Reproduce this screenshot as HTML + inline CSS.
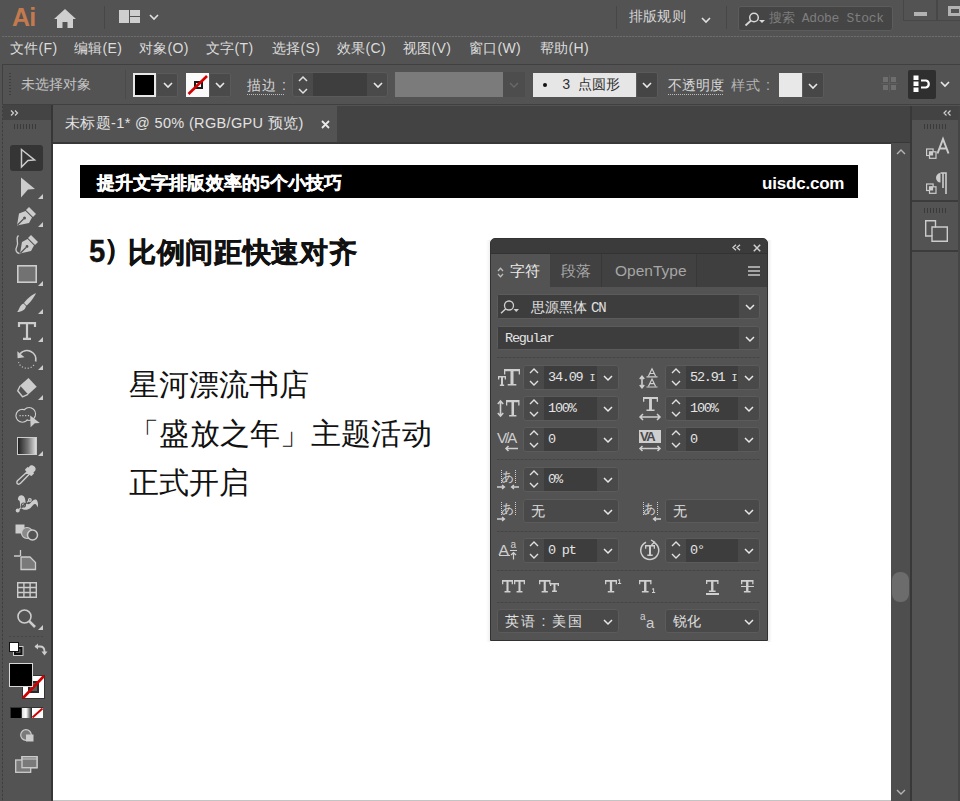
<!DOCTYPE html>
<html><head><meta charset="utf-8">
<style>
*{margin:0;padding:0;box-sizing:border-box}
html,body{width:960px;height:801px;overflow:hidden;background:#535353;font-family:"Liberation Sans",sans-serif;color:#dcdcdc;position:relative}
.a{position:absolute}
.t{position:absolute;white-space:nowrap;line-height:1}
svg{position:absolute;overflow:visible}
.menu{position:absolute;top:40px;font-size:14px;color:#dcdcdc;white-space:nowrap;line-height:16px;letter-spacing:0.3px}
.dd{position:absolute;background:#4a4a4a;border:1px solid #5a5a5a;border-radius:2px}
.pm{font-family:"Liberation Mono",monospace;font-size:13.5px;color:#e4e4e4;letter-spacing:-1.2px}
.pm2{font-family:"Liberation Mono",monospace;letter-spacing:-1px}
.pc{font-size:14px;color:#e0e0e0}
.chev{position:absolute;width:10px;height:6px}
</style></head><body>
<!-- ================= TITLE BAR ================= -->
<div class="t" style="left:12px;top:5px;font-size:25px;color:#c47a4e;font-weight:bold;letter-spacing:-0.8px">Ai</div>
<svg style="left:54px;top:9px" width="22" height="19" viewBox="0 0 22 19"><path d="M11 0 L22 10 L19 10 L19 19 L13.5 19 L13.5 13 L8.5 13 L8.5 19 L3 19 L3 10 L0 10 Z" fill="#cfcfcf"/></svg>
<div class="a" style="left:104px;top:6px;width:1px;height:23px;background:#474747"></div>
<svg style="left:119px;top:10px" width="22" height="14" viewBox="0 0 22 14"><rect x="0" y="0" width="10" height="13" fill="#cfcfcf"/><rect x="11" y="0" width="10" height="6" fill="#cfcfcf"/><rect x="11" y="7" width="10" height="6" fill="#cfcfcf"/></svg>
<svg style="left:149px;top:14px" width="10" height="6" viewBox="0 0 10 6"><path d="M1 1 L5 5 L9 1" fill="none" stroke="#e0e0e0" stroke-width="1.6"/></svg>
<div class="a" style="left:616px;top:6px;width:1px;height:23px;background:#474747"></div>
<div class="t" style="left:629px;top:9px;font-size:14px;color:#d8d8d8;letter-spacing:0.2px">排版规则</div>
<svg style="left:701px;top:17px" width="10" height="6" viewBox="0 0 10 6"><path d="M1 1 L5 5 L9 1" fill="none" stroke="#e0e0e0" stroke-width="1.6"/></svg>
<div class="a" style="left:726px;top:6px;width:1px;height:23px;background:#474747"></div>
<div class="a" style="left:738px;top:6px;width:155px;height:25px;background:#454545;border:1px solid #5c5c5c;border-radius:3px"></div>
<svg style="left:744px;top:12px" width="22" height="14" viewBox="0 0 22 14"><circle cx="10" cy="5.5" r="4.3" fill="none" stroke="#d8d8d8" stroke-width="1.5"/><path d="M7 8.5 L1.5 13.5" stroke="#d8d8d8" stroke-width="1.8"/><path d="M15 8 L21 8 L18 11 Z" fill="#d8d8d8"/></svg>
<div class="t" style="left:769px;top:12px;font-size:13px;color:#7e7e7e;font-family:'Liberation Mono',monospace;letter-spacing:-0.35px">搜索 Adobe Stock</div>
<div class="a" style="left:903px;top:-2px;width:34px;height:23px;border:1px solid #474747"></div>
<div class="a" style="left:914px;top:12px;width:12.5px;height:3.5px;background:#b2b2b2"></div>
<div class="a" style="left:937px;top:-2px;width:30px;height:23px;border:1px solid #474747"></div>
<div class="a" style="left:948px;top:6px;width:14px;height:10px;border:3px solid #b2b2b2"></div>
<div class="a" style="left:2px;top:36px;width:958px;height:1px;background:repeating-linear-gradient(90deg,#6c6c6c 0 2px,#5a5a5a 2px 3px)"></div>

<!-- ================= MENU BAR ================= -->
<div class="menu" style="left:10px">文件(F)</div>
<div class="menu" style="left:74px">编辑(E)</div>
<div class="menu" style="left:139px">对象(O)</div>
<div class="menu" style="left:206px">文字(T)</div>
<div class="menu" style="left:272px">选择(S)</div>
<div class="menu" style="left:337px">效果(C)</div>
<div class="menu" style="left:403px">视图(V)</div>
<div class="menu" style="left:469px">窗口(W)</div>
<div class="menu" style="left:540px">帮助(H)</div>

<!-- ================= CONTROL BAR ================= -->
<div class="a" style="left:2px;top:64px;width:958px;height:41px;border-top:1px solid #404040;border-left:1px solid #404040;border-bottom:1px solid #404040;background:#535353"></div>
<div class="a" style="left:9px;top:73px;width:2px;height:24px;background:repeating-linear-gradient(#3e3e3e 0 1px,transparent 1px 3px)"></div>
<div class="t" style="left:21px;top:77px;font-size:14px;color:#c4c4c4">未选择对象</div>
<div class="a" style="left:125px;top:70px;width:1px;height:29px;background:#4a4a4a"></div>
<!-- fill -->
<div class="a" style="left:133px;top:73px;width:23px;height:24px;background:#000;border:2px solid #e8e8e8"></div>
<div class="dd" style="left:156px;top:73px;width:22px;height:24px;background:#4a4a4a"></div>
<svg style="left:163px;top:82px" width="10" height="6" viewBox="0 0 10 6"><path d="M1 1 L5 5 L9 1" fill="none" stroke="#e8e8e8" stroke-width="1.6"/></svg>
<!-- stroke -->
<div class="a" style="left:186px;top:73px;width:23px;height:24px;background:#fafafa"></div>
<div class="a" style="left:194px;top:81px;width:9px;height:8px;border:2px solid #1a1a1a"></div>
<svg style="left:186px;top:73px" width="23" height="24" viewBox="0 0 23 24"><path d="M2.5 21 L21 3" stroke="#d40000" stroke-width="2.6"/></svg>
<div class="dd" style="left:209px;top:73px;width:22px;height:24px"></div>
<svg style="left:215px;top:82px" width="10" height="6" viewBox="0 0 10 6"><path d="M1 1 L5 5 L9 1" fill="none" stroke="#e8e8e8" stroke-width="1.6"/></svg>
<!-- stroke weight -->
<div class="t" style="left:247px;top:78px;font-size:14px;color:#d4d4d4;letter-spacing:1px">描边 :</div>
<div class="a" style="left:247px;top:94px;width:38px;height:1px;background:repeating-linear-gradient(90deg,#bcbcbc 0 1px,transparent 1px 2px)"></div>
<div class="a" style="left:292px;top:72px;width:96px;height:25px;border:1px solid #5a5a5a;border-radius:3px;background:#4a4a4a"></div>
<div class="a" style="left:313px;top:73px;width:54px;height:23px;background:#3e3e3e"></div>
<svg style="left:298px;top:76px" width="10" height="18" viewBox="0 0 10 18"><path d="M1 5 L5 1 L9 5 M1 13 L5 17 L9 13" fill="none" stroke="#e0e0e0" stroke-width="1.5"/></svg>
<svg style="left:373px;top:82px" width="10" height="6" viewBox="0 0 10 6"><path d="M1 1 L5 5 L9 1" fill="none" stroke="#e8e8e8" stroke-width="1.6"/></svg>
<!-- gray box -->
<div class="a" style="left:395px;top:72px;width:108px;height:25px;background:#7b7b7b"></div>
<div class="a" style="left:503px;top:72px;width:22px;height:25px;background:#4d4d4d"></div>
<svg style="left:509px;top:82px" width="10" height="6" viewBox="0 0 10 6"><path d="M1 1 L5 5 L9 1" fill="none" stroke="#686868" stroke-width="1.5"/></svg>
<!-- brush def -->
<div class="a" style="left:533px;top:73px;width:103px;height:24px;background:#e6e6e6"></div>
<div class="a" style="left:543px;top:83px;width:4px;height:4px;border-radius:2px;background:#111"></div>
<div class="t" style="left:562px;top:78px;font-size:14px;color:#2e2e2e;font-family:'Liberation Mono',monospace">3</div>
<div class="t" style="left:578px;top:77px;font-size:14px;color:#2e2e2e">点圆形</div>
<div class="dd" style="left:636px;top:72px;width:22px;height:26px;background:#454545"></div>
<svg style="left:642px;top:82px" width="10" height="6" viewBox="0 0 10 6"><path d="M1 1 L5 5 L9 1" fill="none" stroke="#e8e8e8" stroke-width="1.6"/></svg>
<!-- opacity -->
<div class="t" style="left:668px;top:78px;font-size:14px;color:#d8d8d8">不透明度</div>
<div class="a" style="left:668px;top:94px;width:56px;height:1px;background:repeating-linear-gradient(90deg,#bcbcbc 0 1px,transparent 1px 2px)"></div>
<div class="t" style="left:731px;top:78px;font-size:14px;color:#b4b4b4;letter-spacing:1px">样式 :</div>
<div class="a" style="left:779px;top:73px;width:23px;height:24px;background:#e8e8e8"></div>
<div class="dd" style="left:802px;top:72px;width:22px;height:26px;background:#474747"></div>
<svg style="left:808px;top:83px" width="10" height="6" viewBox="0 0 10 6"><path d="M1 1 L5 5 L9 1" fill="none" stroke="#e8e8e8" stroke-width="1.6"/></svg>
<!-- align dim -->
<svg style="left:881px;top:75px" width="17" height="17" viewBox="0 0 17 17"><rect x="2" y="2" width="5" height="5" fill="#6e6e6e"/><rect x="10" y="2" width="5" height="5" fill="#6e6e6e"/><rect x="2" y="10" width="5" height="5" fill="#6e6e6e"/><rect x="10" y="10" width="5" height="5" fill="#6e6e6e"/><path d="M8.5 0 V17 M0 8.5 H17" stroke="#606060" stroke-width="0.8"/></svg>
<div class="a" style="left:908px;top:70px;width:28px;height:29px;background:#2f2f2f;border-radius:2px"></div>
<svg style="left:913px;top:75px" width="19" height="18" viewBox="0 0 19 18"><rect x="0.5" y="0.5" width="5" height="4.5" fill="#fff"/><rect x="0.5" y="6.5" width="5" height="4.5" fill="#fff"/><rect x="0.5" y="12.5" width="5" height="4.5" fill="#fff"/><path d="M8 5.5 H13 A3.6 3.6 0 0 1 13 12.5 H8" fill="none" stroke="#fff" stroke-width="2.2"/></svg>
<svg style="left:940px;top:81px" width="10" height="6" viewBox="0 0 10 6"><path d="M1 1 L5 5 L9 1" fill="none" stroke="#e8e8e8" stroke-width="1.6"/></svg>

<!-- ================= TAB ROW ================= -->
<div class="a" style="left:53px;top:106px;width:857px;height:38px;background:#434343"></div>
<div class="a" style="left:53px;top:142px;width:857px;height:2px;background:#383838"></div>
<div class="a" style="left:53px;top:106px;width:284px;height:36px;background:#535353"></div>
<div class="t" style="left:65px;top:116px;font-size:14.5px;color:#e2e2e2;letter-spacing:0.35px">未标题-1* @ 50% (RGB/GPU 预览)</div>
<svg style="left:321px;top:120px" width="9" height="9" viewBox="0 0 9 9"><path d="M1 1 L8 8 M8 1 L1 8" stroke="#e8e8e8" stroke-width="1.8"/></svg>

<!-- ================= CANVAS ================= -->
<div class="a" style="left:53px;top:144px;width:838px;height:657px;background:#ffffff"></div><div class="a" style="left:53px;top:800px;width:838px;height:1px;background:#c4c4c4"></div>
<div class="a" style="left:51px;top:105px;width:2px;height:696px;background:#363636"></div>
<!-- scrollbar -->
<div class="a" style="left:891px;top:143px;width:19px;height:658px;background:#4e4e4e"></div>
<svg style="left:896px;top:149px" width="10" height="6" viewBox="0 0 10 6"><path d="M1 5 L5 1 L9 5" fill="none" stroke="#b4b4b4" stroke-width="1.4"/></svg>
<div class="a" style="left:892px;top:572px;width:17px;height:30px;background:#6c6c6c;border-radius:8px"></div>
<svg style="left:896px;top:789px" width="10" height="6" viewBox="0 0 10 6"><path d="M1 1 L5 5 L9 1" fill="none" stroke="#b4b4b4" stroke-width="1.4"/></svg>

<!-- ================= LEFT TOOLBAR ================= -->
<div class="a" style="left:2px;top:106px;width:1px;height:695px;background:repeating-linear-gradient(#3e3e3e 0 2px,#4e4e4e 2px 4px)"></div>
<div class="a" style="left:3px;top:105px;width:48px;height:15px;background:#444444"></div>
<svg style="left:10px;top:110px" width="9" height="6" viewBox="0 0 9 6"><path d="M1 0.5 L3.5 3 L1 5.5 M5 0.5 L7.5 3 L5 5.5" fill="none" stroke="#d0d0d0" stroke-width="1.2"/></svg>
<div class="a" style="left:3px;top:120px;width:48px;height:681px;background:#535353"></div>
<div class="a" style="left:14px;top:124px;width:23px;height:5px;background:repeating-linear-gradient(90deg,#3a3a3a 0 1px,transparent 1px 3px)"></div>


<!-- ================= RIGHT PANEL ================= -->
<div class="a" style="left:910px;top:106px;width:2px;height:695px;background:#383838"></div>
<div class="a" style="left:912px;top:106px;width:48px;height:14px;background:#434343"></div>
<svg style="left:943px;top:110px" width="9" height="6" viewBox="0 0 9 6"><path d="M3.5 0.5 L1 3 L3.5 5.5 M7.5 0.5 L5 3 L7.5 5.5" fill="none" stroke="#d0d0d0" stroke-width="1.2"/></svg>
<div class="a" style="left:912px;top:120px;width:46px;height:82px;background:#535353;border-bottom:2px solid #3c3c3c"></div>
<div class="a" style="left:924px;top:124px;width:23px;height:5px;background:repeating-linear-gradient(90deg,#3a3a3a 0 1px,transparent 1px 3px)"></div>
<div class="a" style="left:912px;top:203px;width:46px;height:49px;background:#535353;border-bottom:2px solid #3c3c3c"></div>
<div class="a" style="left:924px;top:208px;width:23px;height:5px;background:repeating-linear-gradient(90deg,#3a3a3a 0 1px,transparent 1px 3px)"></div>
<div class="a" style="left:958px;top:106px;width:2px;height:695px;background:#454545"></div>

<!-- TOOLS and CONTENT placeholders -->
<!--TOOLS-->
<div class="a" style="left:10px;top:145px;width:33px;height:26px;background:#353535;border-radius:3px"></div>
<svg style="left:20px;top:148px" width="16" height="21" viewBox="0 0 16 21"><path d="M1.5 1.5 L14.5 12 L8 12.5 L1.5 19 Z" fill="none" stroke="#cccccc" stroke-width="1.5" stroke-linejoin="miter"/></svg>
<svg style="left:20px;top:177px" width="16" height="21" viewBox="0 0 16 21"><path d="M1 0.5 L15 12 L8 12.5 L1 20.5 Z" fill="#cccccc"/></svg>
<svg style="left:38px;top:194px" width="5" height="5" viewBox="0 0 5 5"><path d="M5 0 V5 H0 Z" fill="#cccccc"/></svg>
<svg style="left:16px;top:206px" width="21" height="20" viewBox="0 0 21 20"><path d="M13 1 L20 8 L17 11 L10 4 Z" fill="#cccccc"/><path d="M9.5 5 L16 11.5 L13 17 L1 19.5 L3 7.5 Z" fill="#cccccc"/><path d="M1.5 19 L7.5 13" stroke="#535353" stroke-width="1.2"/><circle cx="8.5" cy="12" r="1.5" fill="#535353"/></svg>
<svg style="left:38px;top:222px" width="5" height="5" viewBox="0 0 5 5"><path d="M5 0 V5 H0 Z" fill="#cccccc"/></svg>
<svg style="left:15px;top:234px" width="24" height="21" viewBox="0 0 24 21"><path d="M16 1 L23 8 L20 11 L13 4 Z" fill="#cccccc"/><path d="M12.5 5 L19 11.5 L16 17 L5 19.5 L7 8 Z" fill="#cccccc"/><path d="M5.5 19 L11 13.5" stroke="#535353" stroke-width="1.2"/><circle cx="12" cy="12.5" r="1.4" fill="#535353"/><path d="M3.5 1.5 C0 4 4 8 2 12 C0 16 1 19 4.5 19.5" fill="none" stroke="#cccccc" stroke-width="1.3"/></svg>
<svg style="left:17px;top:265px" width="20" height="18" viewBox="0 0 20 18"><rect x="0.8" y="0.8" width="18.4" height="16.4" fill="#727272" stroke="#cccccc" stroke-width="1.6"/></svg>
<svg style="left:38px;top:281px" width="5" height="5" viewBox="0 0 5 5"><path d="M5 0 V5 H0 Z" fill="#cccccc"/></svg>
<svg style="left:17px;top:292px" width="20" height="21" viewBox="0 0 20 21"><path d="M19 1 C17 6 12 12 9.5 13.5 L7 11 C9 8 14 3 19 1 Z" fill="#cccccc"/><path d="M6.5 11.5 L9 14 C8.5 17.5 5 20 0 20 C2.5 18 2 13.5 6.5 11.5 Z" fill="#cccccc"/></svg>
<svg style="left:38px;top:309px" width="5" height="5" viewBox="0 0 5 5"><path d="M5 0 V5 H0 Z" fill="#cccccc"/></svg>
<svg style="left:18px;top:322px" width="18" height="18" viewBox="0 0 18 18"><path d="M1 5 V1.2 H17 V5 M9 1.2 V16.8 M5 16.8 H13" fill="none" stroke="#cccccc" stroke-width="2.2"/></svg>
<svg style="left:38px;top:337px" width="5" height="5" viewBox="0 0 5 5"><path d="M5 0 V5 H0 Z" fill="#cccccc"/></svg>
<svg style="left:17px;top:349px" width="20" height="20" viewBox="0 0 20 20"><path d="M3 4.8 A9 9 0 0 1 18.7 12.5" fill="none" stroke="#cccccc" stroke-width="1.7"/><path d="M0.3 2.3 L7.5 8.2 L0.6 9.2 Z" fill="#cccccc"/><path d="M16.9 16 A9 9 0 0 1 1.5 13.3" fill="none" stroke="#cccccc" stroke-width="1.2" stroke-dasharray="1.1 1.9"/></svg>
<svg style="left:38px;top:365px" width="5" height="5" viewBox="0 0 5 5"><path d="M5 0 V5 H0 Z" fill="#cccccc"/></svg>
<svg style="left:17px;top:378px" width="20" height="21" viewBox="0 0 20 21"><path d="M3 7.5 L11.5 0 L19.7 8.7 L11.2 16.5 Z" fill="#cccccc"/><path d="M3.2 7.8 L0.7 12.7 L5.5 18.8 L11 16.3" fill="none" stroke="#cccccc" stroke-width="1.4" stroke-linejoin="round"/></svg>
<svg style="left:38px;top:395px" width="5" height="5" viewBox="0 0 5 5"><path d="M5 0 V5 H0 Z" fill="#cccccc"/></svg>
<svg style="left:15px;top:406px" width="25" height="22" viewBox="0 0 25 22"><circle cx="7.4" cy="9.7" r="6.4" fill="none" stroke="#cccccc" stroke-width="1.3"/><circle cx="14.1" cy="8" r="6.4" fill="none" stroke="#cccccc" stroke-width="1.3"/><circle cx="7.4" cy="9.7" r="5.75" fill="#535353"/><circle cx="14.1" cy="8" r="5.75" fill="#535353"/><path d="M4.5 9.7 H15" stroke="#cccccc" stroke-width="1.2" stroke-dasharray="1.2 1.6"/><path d="M15.2 9.5 L24.8 17 L19.8 17.3 L15.6 21.2 Z" fill="#cccccc"/></svg>
<div class="a" style="left:17px;top:437px;width:20px;height:18px;border:1.5px solid #cccccc;background:linear-gradient(90deg,#222 0%,#777 55%,#ddd 100%)"></div>
<svg style="left:38px;top:451px" width="5" height="5" viewBox="0 0 5 5"><path d="M5 0 V5 H0 Z" fill="#cccccc"/></svg>
<svg style="left:16px;top:465px" width="21" height="20" viewBox="0 0 21 20"><path d="M14.5 0.5 C17 -0.5 20.5 2.5 19.5 5 C19.2 5.8 18.5 6.5 17.5 7.3 L18 8.5 L15.5 11 L14.3 10.5 L9.5 5.8 L9 4.5 L11.5 2 L12.7 2.5 C13.2 1.5 13.8 0.8 14.5 0.5 Z" fill="#cccccc"/><path d="M10.8 7.3 L13 9.5 L4.5 18.3 C3 19.8 0.6 19.4 0.9 17 C1 16.5 1.2 16 1.7 15.5 Z" fill="none" stroke="#cccccc" stroke-width="1.4"/></svg>
<svg style="left:15px;top:494px" width="24" height="19" viewBox="0 0 24 19"><path d="M3 5.5 C2.5 2 6 0 8.5 2 C10 3.5 10.5 6 10.5 8 C11.5 10 13 11 15 9.5 C17 7 19 5 21 5.5 C23 6.5 23.5 11 22.5 13.5 C22 12 21.5 10 20 10 C18.5 10 17.5 12 15.5 14 C13 16 9 16.5 6.5 14.5 C4.5 12.5 5.5 9 4.5 7 C4 6.3 3.2 6.2 3 5.5 Z" fill="#cccccc"/><path d="M2.7 16.5 L14.8 5.9" stroke="#cccccc" stroke-width="1.1"/><path d="M6 13.6 L12 8.4" stroke="#535353" stroke-width="1.4"/><circle cx="8.5" cy="11" r="2" fill="none" stroke="#535353" stroke-width="1.1"/><circle cx="2.7" cy="16.5" r="2" fill="#cccccc"/><circle cx="14.8" cy="5.9" r="2" fill="#cccccc"/><circle cx="14.8" cy="5.9" r="0.7" fill="#535353"/></svg>
<svg style="left:15px;top:524px" width="24" height="17" viewBox="0 0 24 17"><rect x="0.5" y="0.5" width="9" height="9" fill="#cccccc"/><circle cx="12" cy="9" r="5.5" fill="#8a8a8a" stroke="#cccccc" stroke-width="1.2"/><circle cx="17.5" cy="11" r="5" fill="#535353" stroke="#cccccc" stroke-width="1.5"/></svg>
<svg style="left:14px;top:550px" width="22" height="20" viewBox="0 0 22 20"><path d="M6.5 0 V6 M0 6 H6" stroke="#cccccc" stroke-width="1.3"/><path d="M7 7 H16 L21.5 12.5 V19.5 H7 Z" fill="#7a7a7a" stroke="#cccccc" stroke-width="1.3"/></svg>
<svg style="left:17px;top:582px" width="20" height="16" viewBox="0 0 20 16"><path d="M0.7 0.7 H19.3 V15.3 H0.7 Z M0.7 5.5 H19.3 M0.7 10.5 H19.3 M6.9 0.7 V15.3 M13.1 0.7 V15.3" fill="none" stroke="#cccccc" stroke-width="1.4"/></svg>
<svg style="left:17px;top:609px" width="20" height="21" viewBox="0 0 20 21"><circle cx="7.5" cy="7.5" r="6.5" fill="none" stroke="#cccccc" stroke-width="1.6"/><path d="M12.2 12.2 L18 18" stroke="#cccccc" stroke-width="2.6"/></svg>
<svg style="left:38px;top:625px" width="5" height="5" viewBox="0 0 5 5"><path d="M5 0 V5 H0 Z" fill="#cccccc"/></svg>
<div class="a" style="left:9px;top:636px;width:36px;height:1px;background:repeating-linear-gradient(90deg,#464646 0 2px,transparent 2px 4px)"></div>
<svg style="left:9px;top:642px" width="15" height="14" viewBox="0 0 15 14"><rect x="4.5" y="4.5" width="9.5" height="9" fill="#111" stroke="#cccccc" stroke-width="1"/><rect x="7" y="7" width="4.5" height="4" fill="#535353"/><rect x="0.5" y="0.5" width="9" height="9" fill="#fff" stroke="#111" stroke-width="1"/></svg>
<svg style="left:34px;top:643px" width="14" height="13" viewBox="0 0 14 13"><path d="M1.5 3.5 H6 C9.5 3.5 10.5 5.5 10.5 8.5 V10" fill="none" stroke="#cccccc" stroke-width="1.8"/><path d="M4 0.5 L0.5 3.5 L4 6.5 Z M7.5 8.5 L13.5 8.5 L10.5 12.5 Z" fill="#cccccc"/></svg>
<div class="a" style="left:22px;top:675px;width:23px;height:24px;background:#fff;border:1px solid #333"></div>
<div class="a" style="left:28px;top:681px;width:11px;height:12px;border:2.5px solid #2a2a2a;background:#5a5a5a"></div>
<svg style="left:22px;top:675px" width="23" height="24" viewBox="0 0 23 24"><path d="M1 23 L22 1" stroke="#d00000" stroke-width="2.6"/></svg>
<div class="a" style="left:9px;top:663px;width:24px;height:24px;background:#000;border:1.5px solid #d8d8d8"></div>
<div class="a" style="left:10px;top:707px;width:33px;height:11px;background:#333"></div>
<div class="a" style="left:11px;top:708px;width:10px;height:10px;background:#000"></div>
<div class="a" style="left:22px;top:708px;width:9px;height:10px;background:linear-gradient(90deg,#ddd,#fff 45%,#444)"></div>
<div class="a" style="left:32px;top:708px;width:11px;height:10px;background:#fff"></div>
<svg style="left:32px;top:708px" width="11" height="10" viewBox="0 0 11 10"><path d="M0.5 9.5 L10.5 0.5" stroke="#d00000" stroke-width="2"/></svg>
<svg style="left:20px;top:729px" width="14" height="13" viewBox="0 0 14 13"><circle cx="6" cy="6" r="5.3" fill="#7a7a7a" stroke="#cccccc" stroke-width="1.2"/><rect x="6" y="5.5" width="7.5" height="7" fill="#cccccc"/></svg>
<svg style="left:15px;top:756px" width="23" height="17" viewBox="0 0 23 17"><rect x="7" y="0.7" width="15" height="11" fill="#7a7a7a" stroke="#cccccc" stroke-width="1.3"/><rect x="0.7" y="4" width="15" height="12.3" fill="#7a7a7a" stroke="#cccccc" stroke-width="1.3"/><rect x="7" y="0.7" width="15" height="11" fill="#7a7a7a" stroke="#cccccc" stroke-width="1.3"/><path d="M7 3 H22" stroke="#cccccc" stroke-width="1"/></svg>
<svg style="left:926px;top:138px" width="23" height="21" viewBox="0 0 23 21"><path d="M11.5 15.5 L17 1 L22.5 15.5 M13.8 10.5 H20.2" fill="none" stroke="#cccccc" stroke-width="2"/><rect x="0.6" y="11" width="6.5" height="6.5" fill="#535353" stroke="#cccccc" stroke-width="1.2"/><rect x="3.5" y="13.8" width="6.5" height="6.5" fill="#535353" stroke="#cccccc" stroke-width="1.2"/><rect x="3.5" y="13.8" width="3.6" height="3.7" fill="#cccccc"/></svg>
<svg style="left:926px;top:172px" width="21" height="22" viewBox="0 0 21 22"><path d="M14.5 1 H20 V22 M17 1 V16" fill="none" stroke="#cccccc" stroke-width="1.6"/><path d="M14.5 1 A4.5 4.8 0 0 0 14.5 10.6 Z" fill="#cccccc"/><rect x="0.6" y="12" width="6.5" height="6.5" fill="#535353" stroke="#cccccc" stroke-width="1.2"/><rect x="3.5" y="14.8" width="6.5" height="6.5" fill="#535353" stroke="#cccccc" stroke-width="1.2"/><rect x="3.5" y="14.8" width="3.6" height="3.7" fill="#cccccc"/></svg>
<svg style="left:925px;top:220px" width="23" height="22" viewBox="0 0 23 22"><path d="M0.7 0.7 H10.5 V7 H22.3 V21.3 H7 V16 H0.7 Z" fill="none" stroke="#cccccc" stroke-width="1.4"/><path d="M7 16 V7 H10.5" fill="none" stroke="#cccccc" stroke-width="1.4"/></svg>
<!--/TOOLS-->
<div class="a" style="left:80px;top:165px;width:778px;height:33px;background:#000"></div>
<div class="t" style="left:97px;top:175px;font-size:17.5px;font-weight:bold;color:#fff;letter-spacing:0.1px;-webkit-text-stroke:0.35px #fff">提升文字排版效率的5个小技巧</div>
<div class="t" style="left:762px;top:175px;font-size:17px;font-weight:bold;color:#fff;letter-spacing:-0.2px">uisdc.com</div>
<div class="t" style="left:89px;top:236px;font-size:31px;font-weight:bold;color:#111;-webkit-text-stroke:0.3px #111;transform:scaleX(0.95);transform-origin:0 0">5</div><div class="t" style="left:104px;top:236px;font-size:28px;font-weight:bold;color:#111;-webkit-text-stroke:0.4px #111">）</div><div class="t" style="left:128px;top:238.5px;font-size:28px;font-weight:bold;color:#111;-webkit-text-stroke:0.55px #111;letter-spacing:0.7px">比例间距快速对齐</div>
<div class="t" style="left:129px;top:370px;font-size:30.3px;color:#111">星河漂流书店</div>
<div class="t" style="left:129px;top:419px;font-size:30.3px;letter-spacing:0.3px;color:#111">「盛放之年」主题活动</div>
<div class="t" style="left:129px;top:468px;font-size:30.3px;color:#111">正式开启</div>
<!--PANEL-->
<div class="a" style="left:486px;top:240px;width:4px;height:402px;background:linear-gradient(90deg,rgba(0,0,0,0),rgba(0,0,0,.06))"></div>
<div class="a" style="left:768px;top:240px;width:4px;height:402px;background:linear-gradient(90deg,rgba(0,0,0,.08),rgba(0,0,0,0))"></div>
<div class="a" style="left:490px;top:238px;width:278px;height:403px;background:#535353;border:1px solid #323232;border-radius:5px 5px 0 0"></div>
<div class="a" style="left:491px;top:239px;width:276px;height:15px;background:#3b3b3b;border-radius:4px 4px 0 0"></div>
<div class="a" style="left:491px;top:254px;width:276px;height:33px;background:#3f3f3f"></div>
<div class="a" style="left:491px;top:254px;width:59px;height:33px;background:#535353"></div>
<div class="a" style="left:550px;top:254px;width:52px;height:33px;background:#414141;border-right:1px solid #383838"></div>
<div class="a" style="left:602px;top:254px;width:95px;height:33px;background:#414141;border-right:1px solid #383838"></div>
<div class="a" style="left:491px;top:253px;width:276px;height:1px;background:#333"></div>
<svg style="left:732px;top:244px" width="9" height="7" viewBox="0 0 9 7"><path d="M4 0.8 L1 3.5 L4 6.2 M8 0.8 L5 3.5 L8 6.2" fill="none" stroke="#d0d0d0" stroke-width="1.3"/></svg>
<svg style="left:753px;top:244px" width="8" height="8" viewBox="0 0 8 8"><path d="M0.8 0.8 L7.2 7.2 M7.2 0.8 L0.8 7.2" stroke="#d0d0d0" stroke-width="1.5"/></svg>
<svg style="left:497px;top:267px" width="7" height="11" viewBox="0 0 7 11"><path d="M1 4 L3.5 1.3 L6 4 M1 7 L3.5 9.7 L6 7" fill="none" stroke="#bdbdbd" stroke-width="1.3"/></svg>
<div class="t" style="left:510px;top:263px;font-size:15px;color:#ececec">字符</div>
<div class="t" style="left:561px;top:263px;font-size:15px;color:#a6a6a6">段落</div>
<div class="t" style="left:615px;top:263px;font-size:15.5px;color:#a6a6a6">OpenType</div>
<svg style="left:748px;top:266px" width="12" height="10" viewBox="0 0 12 10"><path d="M0 1 H12 M0 5 H12 M0 9 H12" stroke="#c8c8c8" stroke-width="1.5"/></svg>
<div class="a" style="left:497px;top:294px;width:263px;height:25px;background:#494949;border:1px solid #5b5b5b;border-radius:3px"></div>
<div class="a" style="left:498px;top:295px;width:241px;height:23px;background:#3d3d3d"></div>
<svg style="left:745px;top:304px" width="10" height="6" viewBox="0 0 10 6"><path d="M1 1 L5 5 L9 1" fill="none" stroke="#e8e8e8" stroke-width="1.5"/></svg>
<svg style="left:500px;top:300px" width="20" height="14" viewBox="0 0 20 14"><circle cx="9" cy="5.5" r="4.5" fill="none" stroke="#d0d0d0" stroke-width="1.3"/><path d="M5.8 8.8 L1 13.3" stroke="#d0d0d0" stroke-width="1.5"/><path d="M13.5 9 L19 9 L16.25 12 Z" fill="#d0d0d0"/></svg><div class="t pc" style="left:531px;top:300px">思源黑体 <span class="pm2">CN</span></div>
<div class="a" style="left:497px;top:326px;width:263px;height:24px;background:#494949;border:1px solid #5b5b5b;border-radius:3px"></div>
<div class="a" style="left:498px;top:327px;width:241px;height:22px;background:#3d3d3d"></div>
<svg style="left:745px;top:336px" width="10" height="6" viewBox="0 0 10 6"><path d="M1 1 L5 5 L9 1" fill="none" stroke="#e8e8e8" stroke-width="1.5"/></svg>
<div class="t pm" style="left:505px;top:332px">Regular</div>
<div class="a" style="left:497px;top:357px;width:263px;height:1px;background:repeating-linear-gradient(90deg,#454545 0 2px,#4c4c4c 2px 4px)"></div>
<div class="a" style="left:523px;top:365px;width:96px;height:25px;background:#494949;border:1px solid #5b5b5b;border-radius:3px"></div>
<div class="a" style="left:544px;top:366px;width:53px;height:23px;background:#3d3d3d"></div>
<svg style="left:529px;top:368px" width="10" height="18" viewBox="0 0 10 18"><path d="M1 5 L5 1 L9 5 M1 13 L5 17 L9 13" fill="none" stroke="#e0e0e0" stroke-width="1.4"/></svg>
<svg style="left:603px;top:375px" width="10" height="6" viewBox="0 0 10 6"><path d="M1 1 L5 5 L9 1" fill="none" stroke="#e8e8e8" stroke-width="1.5"/></svg>
<div class="t pm" style="left:548px;top:371px">34.09 <span style="font-size:10px">I</span></div>
<div class="a" style="left:665px;top:365px;width:95px;height:25px;background:#494949;border:1px solid #5b5b5b;border-radius:3px"></div>
<div class="a" style="left:686px;top:366px;width:52px;height:23px;background:#3d3d3d"></div>
<svg style="left:671px;top:368px" width="10" height="18" viewBox="0 0 10 18"><path d="M1 5 L5 1 L9 5 M1 13 L5 17 L9 13" fill="none" stroke="#e0e0e0" stroke-width="1.4"/></svg>
<svg style="left:744px;top:375px" width="10" height="6" viewBox="0 0 10 6"><path d="M1 1 L5 5 L9 1" fill="none" stroke="#e8e8e8" stroke-width="1.5"/></svg>
<div class="t pm" style="left:690px;top:371px">52.91 <span style="font-size:10px">I</span></div>
<div class="a" style="left:523px;top:396px;width:96px;height:25px;background:#494949;border:1px solid #5b5b5b;border-radius:3px"></div>
<div class="a" style="left:544px;top:397px;width:53px;height:23px;background:#3d3d3d"></div>
<svg style="left:529px;top:399px" width="10" height="18" viewBox="0 0 10 18"><path d="M1 5 L5 1 L9 5 M1 13 L5 17 L9 13" fill="none" stroke="#e0e0e0" stroke-width="1.4"/></svg>
<svg style="left:603px;top:406px" width="10" height="6" viewBox="0 0 10 6"><path d="M1 1 L5 5 L9 1" fill="none" stroke="#e8e8e8" stroke-width="1.5"/></svg>
<div class="t pm" style="left:548px;top:402px">100%</div>
<div class="a" style="left:665px;top:396px;width:95px;height:25px;background:#494949;border:1px solid #5b5b5b;border-radius:3px"></div>
<div class="a" style="left:686px;top:397px;width:52px;height:23px;background:#3d3d3d"></div>
<svg style="left:671px;top:399px" width="10" height="18" viewBox="0 0 10 18"><path d="M1 5 L5 1 L9 5 M1 13 L5 17 L9 13" fill="none" stroke="#e0e0e0" stroke-width="1.4"/></svg>
<svg style="left:744px;top:406px" width="10" height="6" viewBox="0 0 10 6"><path d="M1 1 L5 5 L9 1" fill="none" stroke="#e8e8e8" stroke-width="1.5"/></svg>
<div class="t pm" style="left:690px;top:402px">100%</div>
<div class="a" style="left:523px;top:427px;width:96px;height:25px;background:#494949;border:1px solid #5b5b5b;border-radius:3px"></div>
<div class="a" style="left:544px;top:428px;width:53px;height:23px;background:#3d3d3d"></div>
<svg style="left:529px;top:430px" width="10" height="18" viewBox="0 0 10 18"><path d="M1 5 L5 1 L9 5 M1 13 L5 17 L9 13" fill="none" stroke="#e0e0e0" stroke-width="1.4"/></svg>
<svg style="left:603px;top:437px" width="10" height="6" viewBox="0 0 10 6"><path d="M1 1 L5 5 L9 1" fill="none" stroke="#e8e8e8" stroke-width="1.5"/></svg>
<div class="t pm" style="left:548px;top:433px">0</div>
<div class="a" style="left:665px;top:427px;width:95px;height:25px;background:#494949;border:1px solid #5b5b5b;border-radius:3px"></div>
<div class="a" style="left:686px;top:428px;width:52px;height:23px;background:#3d3d3d"></div>
<svg style="left:671px;top:430px" width="10" height="18" viewBox="0 0 10 18"><path d="M1 5 L5 1 L9 5 M1 13 L5 17 L9 13" fill="none" stroke="#e0e0e0" stroke-width="1.4"/></svg>
<svg style="left:744px;top:437px" width="10" height="6" viewBox="0 0 10 6"><path d="M1 1 L5 5 L9 1" fill="none" stroke="#e8e8e8" stroke-width="1.5"/></svg>
<div class="t pm" style="left:690px;top:433px">0</div>
<div class="a" style="left:497px;top:459px;width:263px;height:1px;background:repeating-linear-gradient(90deg,#454545 0 2px,#4c4c4c 2px 4px)"></div>
<div class="a" style="left:523px;top:467px;width:96px;height:25px;background:#494949;border:1px solid #5b5b5b;border-radius:3px"></div>
<div class="a" style="left:544px;top:468px;width:53px;height:23px;background:#3d3d3d"></div>
<svg style="left:529px;top:470px" width="10" height="18" viewBox="0 0 10 18"><path d="M1 5 L5 1 L9 5 M1 13 L5 17 L9 13" fill="none" stroke="#e0e0e0" stroke-width="1.4"/></svg>
<svg style="left:603px;top:477px" width="10" height="6" viewBox="0 0 10 6"><path d="M1 1 L5 5 L9 1" fill="none" stroke="#e8e8e8" stroke-width="1.5"/></svg>
<div class="t pm" style="left:548px;top:473px">0%</div>
<div class="a" style="left:523px;top:499px;width:96px;height:24px;background:#494949;border:1px solid #5b5b5b;border-radius:3px"></div>
<svg style="left:603px;top:509px" width="10" height="6" viewBox="0 0 10 6"><path d="M1 1 L5 5 L9 1" fill="none" stroke="#e8e8e8" stroke-width="1.5"/></svg>
<div class="t pc" style="left:531px;top:504px">无</div>
<div class="a" style="left:665px;top:499px;width:95px;height:24px;background:#494949;border:1px solid #5b5b5b;border-radius:3px"></div>
<svg style="left:744px;top:509px" width="10" height="6" viewBox="0 0 10 6"><path d="M1 1 L5 5 L9 1" fill="none" stroke="#e8e8e8" stroke-width="1.5"/></svg>
<div class="t pc" style="left:673px;top:504px">无</div>
<div class="a" style="left:497px;top:531px;width:263px;height:1px;background:repeating-linear-gradient(90deg,#454545 0 2px,#4c4c4c 2px 4px)"></div>
<div class="a" style="left:523px;top:538px;width:96px;height:25px;background:#494949;border:1px solid #5b5b5b;border-radius:3px"></div>
<div class="a" style="left:544px;top:539px;width:53px;height:23px;background:#3d3d3d"></div>
<svg style="left:529px;top:541px" width="10" height="18" viewBox="0 0 10 18"><path d="M1 5 L5 1 L9 5 M1 13 L5 17 L9 13" fill="none" stroke="#e0e0e0" stroke-width="1.4"/></svg>
<svg style="left:603px;top:548px" width="10" height="6" viewBox="0 0 10 6"><path d="M1 1 L5 5 L9 1" fill="none" stroke="#e8e8e8" stroke-width="1.5"/></svg>
<div class="t pm" style="left:548px;top:544px">0 pt</div>
<div class="a" style="left:665px;top:538px;width:95px;height:25px;background:#494949;border:1px solid #5b5b5b;border-radius:3px"></div>
<div class="a" style="left:686px;top:539px;width:52px;height:23px;background:#3d3d3d"></div>
<svg style="left:671px;top:541px" width="10" height="18" viewBox="0 0 10 18"><path d="M1 5 L5 1 L9 5 M1 13 L5 17 L9 13" fill="none" stroke="#e0e0e0" stroke-width="1.4"/></svg>
<svg style="left:744px;top:548px" width="10" height="6" viewBox="0 0 10 6"><path d="M1 1 L5 5 L9 1" fill="none" stroke="#e8e8e8" stroke-width="1.5"/></svg>
<div class="t pm" style="left:690px;top:544px">0°</div>
<div class="a" style="left:497px;top:570px;width:263px;height:1px;background:repeating-linear-gradient(90deg,#454545 0 2px,#4c4c4c 2px 4px)"></div>
<div class="a" style="left:497px;top:602px;width:263px;height:1px;background:repeating-linear-gradient(90deg,#454545 0 2px,#4c4c4c 2px 4px)"></div>
<div class="a" style="left:497px;top:609px;width:122px;height:24px;background:#494949;border:1px solid #5b5b5b;border-radius:3px"></div>
<svg style="left:603px;top:619px" width="10" height="6" viewBox="0 0 10 6"><path d="M1 1 L5 5 L9 1" fill="none" stroke="#e8e8e8" stroke-width="1.5"/></svg>
<div class="t pc" style="left:505px;top:614px"><span style="letter-spacing:1.5px">英语 : 美国</span></div>
<div class="a" style="left:665px;top:609px;width:95px;height:24px;background:#494949;border:1px solid #5b5b5b;border-radius:3px"></div>
<svg style="left:744px;top:619px" width="10" height="6" viewBox="0 0 10 6"><path d="M1 1 L5 5 L9 1" fill="none" stroke="#e8e8e8" stroke-width="1.5"/></svg>
<div class="t pc" style="left:673px;top:614px">锐化</div>
<svg style="left:497.5px;top:375.5px" width="8" height="10" viewBox="0 0 8 10"><path d="M0 0 H8 V3.40 H6.70 V1.60 H5.00 V8.60 H6.16 V10 H1.84 V8.60 H3.00 V1.60 H1.3 V3.40 H0 Z" fill="#cfcfcf"/></svg>
<svg style="left:503.5px;top:369px" width="16" height="16.5" viewBox="0 0 16 16.5"><path d="M0 0 H16 V5.61 H14.70 V2.31 H9.52 V15.10 H12.32 V16.5 H3.68 V15.10 H6.48 V2.31 H1.3 V5.61 H0 Z" fill="#cfcfcf"/></svg>
<svg style="left:639px;top:368px" width="23" height="20" viewBox="0 0 23 20"><path d="M9.5 8 L13 0.8 L16.5 8 M10.8 5.5 H15.2 M7.5 8.8 H18.5 M9.5 18.2 L13 11 L16.5 18.2 M10.8 15.7 H15.2 M7.5 19 H18.5" fill="none" stroke="#cfcfcf" stroke-width="1.2"/><path d="M3 9 V19 M0.8 11 L3 8.3 L5.2 11 M0.8 17 L3 19.7 L5.2 17" fill="none" stroke="#cfcfcf" stroke-width="1.6"/></svg>
<svg style="left:497px;top:400px" width="7" height="17" viewBox="0 0 7 17"><path d="M3.5 1.5 V15.5 M0.8 4 L3.5 1 L6.2 4 M0.8 13 L3.5 16 L6.2 13" fill="none" stroke="#cfcfcf" stroke-width="1.6"/></svg>
<svg style="left:506px;top:400px" width="13.5" height="16.5" viewBox="0 0 13.5 16.5"><path d="M0 0 H13.5 V5.61 H12.20 V2.31 H8.03 V15.10 H10.39 V16.5 H3.10 V15.10 H5.47 V2.31 H1.3 V5.61 H0 Z" fill="#cfcfcf"/></svg>
<svg style="left:643px;top:397px" width="15" height="14" viewBox="0 0 15 14"><path d="M0 0 H15 V4.76 H13.70 V1.96 H8.93 V12.60 H11.55 V14 H3.45 V12.60 H6.08 V1.96 H1.3 V4.76 H0 Z" fill="#cfcfcf"/></svg>
<svg style="left:639px;top:413px" width="22" height="8" viewBox="0 0 22 8"><path d="M1 4 H21 M4 1 L1 4 L4 7 M18 1 L21 4 L18 7" fill="none" stroke="#cfcfcf" stroke-width="1.5"/></svg>
<div class="t" style="left:497px;top:430px;font-size:15px;color:#cfcfcf;letter-spacing:-2px">V/A</div>
<svg style="left:505px;top:445px" width="14" height="7" viewBox="0 0 14 7"><path d="M1 3.5 H13 M3.5 1 L1 3.5 L3.5 6" fill="none" stroke="#cfcfcf" stroke-width="1.5"/></svg>
<div class="a" style="left:639px;top:430px;width:22px;height:13px;background:#cfcfcf"></div>
<div class="t" style="left:640px;top:430px;font-size:13px;font-weight:bold;color:#4a4a4a;letter-spacing:-1.5px">VA</div>
<svg style="left:639px;top:445px" width="22" height="7" viewBox="0 0 22 7"><path d="M1 3.5 H21 M3.5 1 L1 3.5 L3.5 6 M18.5 1 L21 3.5 L18.5 6" fill="none" stroke="#cfcfcf" stroke-width="1.5"/></svg>
<svg style="left:497px;top:469px" width="22" height="22" viewBox="0 0 22 22"><path d="M4.5 1 V14 M18.5 1 V14" stroke="#cfcfcf" stroke-width="1" stroke-dasharray="1 1"/><path d="M0 18 H7 M5 16 L7.5 18 L5 20" fill="none" stroke="#cfcfcf" stroke-width="1.3"/><path d="M22 18 H15 M17 16 L14.5 18 L17 20" fill="none" stroke="#cfcfcf" stroke-width="1.3"/></svg><div class="t" style="left:501px;top:470px;font-size:13px;color:#cfcfcf">あ</div>
<svg style="left:497px;top:501px" width="22" height="22" viewBox="0 0 22 22"><path d="M4.5 1 V14 M18.5 1 V14" stroke="#cfcfcf" stroke-width="1" stroke-dasharray="1 1"/><path d="M0 18 H7 M5 16 L7.5 18 L5 20" fill="none" stroke="#cfcfcf" stroke-width="1.3"/></svg><div class="t" style="left:501px;top:502px;font-size:13px;color:#cfcfcf">あ</div>
<svg style="left:639px;top:501px" width="22" height="22" viewBox="0 0 22 22"><path d="M4.5 1 V14 M18.5 1 V14" stroke="#cfcfcf" stroke-width="1" stroke-dasharray="1 1"/><path d="M22 18 H15 M17 16 L14.5 18 L17 20" fill="none" stroke="#cfcfcf" stroke-width="1.3"/></svg><div class="t" style="left:643px;top:502px;font-size:13px;color:#cfcfcf">あ</div>
<div class="t" style="left:498.5px;top:541.5px;font-size:15.5px;color:#cfcfcf">A</div>
<div class="t" style="left:510.5px;top:540px;font-size:10px;color:#cfcfcf">a</div>
<svg style="left:497px;top:547px" width="22" height="13" viewBox="0 0 22 13"><path d="M2 8.5 H13 M13 3.5 H20 M16.5 12.5 V6 M14 8 L16.5 5.5 L19 8" fill="none" stroke="#cfcfcf" stroke-width="1.2"/></svg>
<svg style="left:639px;top:540px" width="22" height="21" viewBox="0 0 22 21"><path d="M14.5 2.2 A9 9 0 1 1 7 2.2" fill="none" stroke="#cfcfcf" stroke-width="1.5"/><path d="M12 0 L15.5 2.2 L12.5 5" fill="none" stroke="#cfcfcf" stroke-width="1.4"/></svg>
<svg style="left:645px;top:545px" width="10" height="11" viewBox="0 0 10 11"><path d="M0 0 H10 V3.74 H8.70 V1.60 H6.00 V9.60 H7.70 V11 H2.30 V9.60 H4.00 V1.60 H1.3 V3.74 H0 Z" fill="#cfcfcf"/></svg>
<svg style="left:502px;top:579.5px" width="11" height="12.5" viewBox="0 0 11 12.5"><path d="M0 0 H11 V4.25 H9.70 V1.75 H6.54 V11.10 H8.47 V12.5 H2.53 V11.10 H4.46 V1.75 H1.3 V4.25 H0 Z" fill="#cfcfcf"/></svg>
<svg style="left:513.5px;top:579.5px" width="11" height="12.5" viewBox="0 0 11 12.5"><path d="M0 0 H11 V4.25 H9.70 V1.75 H6.54 V11.10 H8.47 V12.5 H2.53 V11.10 H4.46 V1.75 H1.3 V4.25 H0 Z" fill="#cfcfcf"/></svg>
<svg style="left:539px;top:579.5px" width="11.5" height="12.5" viewBox="0 0 11.5 12.5"><path d="M0 0 H11.5 V4.25 H10.20 V1.75 H6.84 V11.10 H8.86 V12.5 H2.64 V11.10 H4.66 V1.75 H1.3 V4.25 H0 Z" fill="#cfcfcf"/></svg>
<svg style="left:549.5px;top:583px" width="9" height="9" viewBox="0 0 9 9"><path d="M0 0 H9 V3.06 H7.70 V1.60 H5.50 V7.60 H6.93 V9 H2.07 V7.60 H3.50 V1.60 H1.3 V3.06 H0 Z" fill="#cfcfcf"/></svg>
<svg style="left:604.5px;top:579.5px" width="12" height="12.5" viewBox="0 0 12 12.5"><path d="M0 0 H12 V4.25 H10.70 V1.75 H7.14 V11.10 H9.24 V12.5 H2.76 V11.10 H4.86 V1.75 H1.3 V4.25 H0 Z" fill="#cfcfcf"/></svg>
<svg style="left:617px;top:579px" width="5" height="5" viewBox="0 0 5 5"><path d="M1 1.3 L2.6 0.5 V4.5 M1 4.5 H4.2" fill="none" stroke="#cfcfcf" stroke-width="1"/></svg>
<svg style="left:639px;top:579.5px" width="12.5" height="12.5" viewBox="0 0 12.5 12.5"><path d="M0 0 H12.5 V4.25 H11.20 V1.75 H7.44 V11.10 H9.62 V12.5 H2.88 V11.10 H5.06 V1.75 H1.3 V4.25 H0 Z" fill="#cfcfcf"/></svg>
<svg style="left:650.5px;top:588px" width="5" height="5" viewBox="0 0 5 5"><path d="M1 1.3 L2.6 0.5 V4.5 M1 4.5 H4.2" fill="none" stroke="#cfcfcf" stroke-width="1"/></svg>
<svg style="left:706px;top:579.5px" width="12.5" height="12" viewBox="0 0 12.5 12"><path d="M0 0 H12.5 V4.08 H11.20 V1.68 H7.44 V10.60 H9.62 V12 H2.88 V10.60 H5.06 V1.68 H1.3 V4.08 H0 Z" fill="#cfcfcf"/></svg>
<div class="a" style="left:705.5px;top:593px;width:13.5px;height:1.6px;background:#cfcfcf"></div>
<svg style="left:741px;top:579.5px" width="12.5" height="12.5" viewBox="0 0 12.5 12.5"><path d="M0 0 H12.5 V4.25 H11.20 V1.75 H7.44 V11.10 H9.62 V12.5 H2.88 V11.10 H5.06 V1.75 H1.3 V4.25 H0 Z" fill="#cfcfcf"/></svg>
<div class="a" style="left:741px;top:585.5px;width:13px;height:1.6px;background:#cfcfcf"></div>
<div class="t" style="left:640px;top:612px;font-size:10px;color:#cfcfcf">a</div>
<div class="t" style="left:646px;top:615px;font-size:15px;color:#cfcfcf">a</div>
<!--/PANEL-->
</body></html>
